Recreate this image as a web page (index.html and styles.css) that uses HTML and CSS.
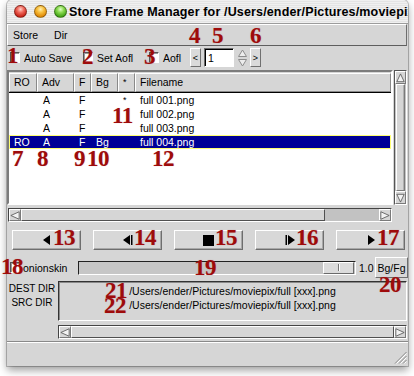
FILE: index.html
```html
<!DOCTYPE html>
<html>
<head>
<meta charset="utf-8">
<link rel="stylesheet" href="styles.css">
</head>
<body>
<div class="stage">
  <div class="window">
    <div class="titlebar">
      <span class="light red"></span><span class="light yellow"></span><span class="light green"></span>
      <span class="title">Store Frame Manager for /Users/ender/Pictures/moviepix</span>
    </div>
    <div class="menubar"><span class="menu">Store</span><span class="menu">Dir</span></div>
    <div class="toolbar">
      <label class="chk w1"><span class="box"></span>Auto Save</label>
      <label class="chk w2"><span class="box"></span>Set Aofl</label>
      <label class="chk w3"><span class="box"></span>Aofl</label>
      <span class="sbtn">&lt;</span>
      <span class="field">1</span>
      <span class="spin"><svg width="9" height="18" viewBox="0 0 9 18"><polygon points="4.5,1 8.5,7.5 0.5,7.5" fill="#ececec" stroke="#8c8c8c"/><polygon points="0.5,10.5 8.5,10.5 4.5,17" fill="#ececec" stroke="#8c8c8c"/></svg></span>
      <span class="sbtn">&gt;</span>
    </div>
    <div class="tablewrap">
      <div class="list">
        <div class="row hdr">
          <span class="c">RO</span><span class="c">Adv</span><span class="c">F</span><span class="c">Bg</span><span class="c star">*</span><span class="c">Filename</span>
        </div>
        <div class="tbody">
          <div class="row"><span class="c"></span><span class="c a">A</span><span class="c">F</span><span class="c"></span><span class="c star">*</span><span class="c">full 001.png</span></div>
          <div class="row"><span class="c"></span><span class="c a">A</span><span class="c">F</span><span class="c"></span><span class="c"></span><span class="c">full 002.png</span></div>
          <div class="row"><span class="c"></span><span class="c a">A</span><span class="c">F</span><span class="c"></span><span class="c"></span><span class="c">full 003.png</span></div>
          <div class="row sel"><span class="c">RO</span><span class="c a">A</span><span class="c">F</span><span class="c">Bg</span><span class="c"></span><span class="c">full 004.png</span></div>
        </div>
      </div>
      <div class="vscroll">
        <span class="arrowbox"><svg width="11" height="12" viewBox="0 0 11 12"><polygon points="5.5,1 10,10.5 1,10.5" fill="#f2f2f2" stroke="#555"/></svg></span>
        <span class="vthumb"></span>
        <span class="arrowbox"><svg width="11" height="12" viewBox="0 0 11 12"><polygon points="1,1.5 10,1.5 5.5,11" fill="#f2f2f2" stroke="#555"/></svg></span>
      </div>
    </div>
    <div class="hscroll hs1">
      <span class="harrow"><svg width="12" height="11" viewBox="0 0 12 11"><polygon points="1,5.5 11,1 11,10" fill="#f2f2f2" stroke="#555"/></svg></span>
      <span class="hthumb t1"></span>
      <span class="trough"></span>
      <span class="harrow"><svg width="12" height="11" viewBox="0 0 12 11"><polygon points="11,5.5 1,1 1,10" fill="#f2f2f2" stroke="#555"/></svg></span>
    </div>
    <div class="buttons">
      <span class="btn"><svg width="8" height="10" viewBox="0 0 8 10"><polygon points="7,0 7,10 0,5" fill="#000"/></svg></span>
      <span class="btn"><svg width="10" height="10" viewBox="0 0 10 10"><polygon points="7,0 7,10 0,5" fill="#000"/><rect x="8" y="0" width="1.5" height="10" fill="#000"/></svg></span>
      <span class="btn"><svg width="11" height="11" viewBox="0 0 11 11"><rect x="0" y="0" width="11" height="11" fill="#000"/></svg></span>
      <span class="btn"><svg width="10" height="10" viewBox="0 0 10 10"><rect x="0.5" y="0" width="1.5" height="10" fill="#000"/><polygon points="3,0 3,10 10,5" fill="#000"/></svg></span>
      <span class="btn"><svg width="8" height="10" viewBox="0 0 8 10"><polygon points="1,0 1,10 8,5" fill="#000"/></svg></span>
    </div>
    <div class="onion">
      <label class="chk"><span class="box"></span>onionskin</label>
      <span class="slider"><span class="sthumb"><span class="tick"></span></span></span>
      <span class="val">1.0</span>
      <span class="bgfg">Bg/Fg</span>
    </div>
    <div class="dirs">
      <div class="labels"><div>DEST DIR</div><div>SRC DIR</div></div>
      <div class="dirbox">
        <div>/Users/ender/Pictures/moviepix/full [xxx].png</div>
        <div>/Users/ender/Pictures/moviepix/full [xxx].png</div>
      </div>
    </div>
    <div class="hscroll hs2">
      <span class="harrow"><svg width="12" height="11" viewBox="0 0 12 11"><polygon points="1,5.5 11,1 11,10" fill="#f2f2f2" stroke="#555"/></svg></span>
      <span class="hthumb t2"></span>
      <span class="harrow"><svg width="12" height="11" viewBox="0 0 12 11"><polygon points="11,5.5 1,1 1,10" fill="#f2f2f2" stroke="#555"/></svg></span>
    </div>
    <div class="footer">
      <svg class="grip" width="13" height="13" viewBox="0 0 13 13"><g stroke="#8a8a8a" stroke-width="1"><line x1="12.5" y1="1" x2="1" y2="12.5"/><line x1="12.5" y1="5" x2="5" y2="12.5"/><line x1="12.5" y1="9" x2="9" y2="12.5"/></g><g stroke="#fff" stroke-width="1"><line x1="12.5" y1="2.5" x2="2.5" y2="12.5"/><line x1="12.5" y1="6.5" x2="6.5" y2="12.5"/><line x1="12.5" y1="10.5" x2="10.5" y2="12.5"/></g></svg>
    </div>
  </div>

  <span class="n n1">1</span>
  <span class="n n2">2</span>
  <span class="n n3">3</span>
  <span class="n n4">4</span>
  <span class="n n5">5</span>
  <span class="n n6">6</span>
  <span class="n n7">7</span>
  <span class="n n8">8</span>
  <span class="n n9">9</span>
  <span class="n n10">10</span>
  <span class="n n11">11</span>
  <span class="n n12">12</span>
  <span class="n n13">13</span>
  <span class="n n14">14</span>
  <span class="n n15">15</span>
  <span class="n n16">16</span>
  <span class="n n17">17</span>
  <span class="n n18">18</span>
  <span class="n n19">19</span>
  <span class="n n20">20</span>
  <span class="n n21">21</span>
  <span class="n n22">22</span>
</div>
</body>
</html>
```
FILE: styles.css
```css
* { box-sizing: border-box; }
html, body { margin: 0; padding: 0; background: #ffffff; }
body {
  font-family: "Liberation Sans", Arial, sans-serif;
  font-size: 10.5px;
  color: #000;
}
.stage { position: relative; width: 414px; height: 376px; overflow: hidden; }

.window {
  margin-left: 7px;
  width: 401px;
  height: 366px;
  background: #d6d6d6;
  border-radius: 5px 5px 0 0;
  box-shadow: 0 0 0 1px rgba(0,0,0,0.22), 0 4px 9px rgba(0,0,0,0.4);
  display: flex;
  flex-direction: column;
  overflow: hidden;
}

/* title bar */
.titlebar {
  height: 24px;
  flex: none;
  display: flex;
  align-items: center;
  padding-left: 7px;
  background: repeating-linear-gradient(to bottom, #f0f0f0 0, #f0f0f0 1px, #e4e4e4 1px, #e4e4e4 2px);
  border-bottom: 1px solid #9c9c9c;
  white-space: nowrap;
  overflow: hidden;
}
.light {
  width: 13px; height: 13px; border-radius: 50%;
  margin-right: 7px; flex: none;
  border: 1px solid rgba(0,0,0,0.35);
}
.red { background: radial-gradient(circle at 50% 30%, #ffd0c8 0, #f06a5e 35%, #c8261a 75%, #8e140c 100%); }
.yellow { background: radial-gradient(circle at 50% 30%, #fff0b0 0, #f8c040 35%, #e08a08 75%, #a05a00 100%); }
.green { background: radial-gradient(circle at 50% 30%, #e0ffc8 0, #8ada50 35%, #44a418 75%, #236a08 100%); }
.title {
  margin-left: -5px;
  font-weight: bold;
  font-size: 12.5px;
  letter-spacing: 0.15px;
  color: #000;
}

/* menu */
.menubar {
  height: 22px; flex: none;
  display: flex; align-items: center;
  padding-left: 5px;
  border-top: 1px solid #fff;
  border-left: 1px solid #fff;
  border-bottom: 1px solid #5e5e5e;
  border-right: 1px solid #6e6e6e;
  margin-right: 1px;
}
.menu { margin-right: 16px; }

/* toolbar */
.toolbar {
  height: 23px; flex: none;
  display: flex; align-items: center;
  padding-left: 3px;
}
.chk { display: flex; align-items: center; white-space: nowrap; }
.w1 { width: 73px; }
.w2 { width: 66px; }
.w3 { width: 41px; }
.box {
  width: 10px; height: 11px; flex: none;
  margin-right: 4px;
  background: #fff;
  border: 1px solid;
  border-color: #555 #fff #fff #555;
  box-shadow: inset 1px 1px #999;
}
.sbtn {
  width: 11px; height: 19px;
  display: flex; align-items: center; justify-content: center;
  font-size: 9px;
  background: #dadada;
  border: 1px solid;
  border-color: #fff #707070 #707070 #fff;
}
.field {
  width: 30px; height: 19px;
  margin-left: 3px;
  background: #fff;
  border: 1px solid;
  border-color: #6a6a6a #fff #fff #6a6a6a;
  box-shadow: inset 1px 1px #000;
  padding: 3px 0 0 3px;
  line-height: 12px;
}
.spin { width: 15px; display: flex; justify-content: center; padding-top: 1px; margin-left: 1px; }

/* table */
.tablewrap {
  height: 135px; flex: none;
  margin-top: 1px;
  display: flex;
}
.list {
  width: 386px;
  height: 135px;
  border: 2px solid;
  border-color: #7c7c7c #fff #fff #7c7c7c;
  display: flex; flex-direction: column;
  background: #d6d6d6;
}
.row {
  display: grid;
  grid-template-columns: 28px 37px 17px 27px 17px 1fr;
  height: 14px;
  line-height: 14px;
}
.hdr {
  height: 21px;
  line-height: 17px;
  border-bottom: 1px solid #000;
  padding-top: 1px;
}
.hdr .c {
  padding-left: 4px;
  border: 1px solid;
  border-color: #fff #8a8a8a #8a8a8a #fff;
  background: #d6d6d6;
}
.tbody { flex: 1; background: #fff; padding-top: 0; }
.tbody .c { padding-left: 5px; }
.tbody .c.a { padding-left: 6px; }
.star { font-size: 9px; }
.sel {
  background: #000096;
  color: #fff;
  box-shadow: inset 0 0 0 1px #ffff72;
}

.vscroll {
  width: 13px; height: 135px;
  margin-left: 1px;
  border: 1px solid;
  border-color: #555 #fff #fff #555;
  display: flex; flex-direction: column;
  background: #c4c4c4;
}
.arrowbox {
  height: 13px; flex: none;
  display: flex; align-items: center; justify-content: center;
  background: #d6d6d6;
  border: 1px solid; border-color: #fff #7a7a7a #7a7a7a #fff;
}
.vthumb {
  flex: 1;
  background: #d6d6d6;
  border: 1px solid; border-color: #fff #7a7a7a #7a7a7a #fff;
  margin: 0 1px;
  box-shadow: inset -1px 0 #b0b0b0;
}

.hscroll {
  flex: none;
  height: 14px;
  display: flex;
  border: 1px solid;
  border-color: #444 #fff #fff #444;
  background: #c2c2c2;
}
.hs1 { margin: 3px 0 0 1px; width: 384px; }
.harrow {
  width: 12px; flex: none;
  display: flex; align-items: center; justify-content: center;
  background: #d6d6d6;
  border: 1px solid; border-color: #fff #7a7a7a #7a7a7a #fff;
}
.hthumb {
  background: #d6d6d6;
  border: 1px solid; border-color: #fff #505050 #505050 #fff;
}
.t1 { width: 304px; }
.trough { flex: 1; }
.t2 { flex: 1; }

/* buttons */
.buttons {
  flex: none;
  height: 20px;
  margin-top: 8px;
  padding-left: 5px;
  display: flex;
  gap: 12px;
}
.btn {
  width: 69px; height: 20px;
  display: flex; align-items: center; justify-content: center;
  background: #d8d8d8;
  border: 1px solid;
  border-color: #fff #6e6e6e #6e6e6e #fff;
  box-shadow: inset -1px -1px #a8a8a8;
}

/* onionskin row */
.onion {
  flex: none;
  height: 21px;
  margin-top: 7px;
  padding-left: 3px;
  display: flex; align-items: center;
}
.onion .chk { width: 68px; }
.onion .box { margin-right: 3px; }
.slider {
  width: 278px; height: 14px;
  border: 1px solid;
  border-color: #222 #fff #fff #222;
  background: #c6c6c6;
  display: flex; justify-content: flex-end;
  padding-right: 1px;
}
.sthumb {
  width: 31px; height: 12px;
  background: #dcdcdc;
  border: 1px solid; border-color: #fff #6a6a6a #6a6a6a #fff;
  display: flex; justify-content: center; align-items: center;
}
.tick { width: 1px; height: 7px; background: #777; box-shadow: 1px 0 #fff; }
.val { margin-left: 3px; width: 16px; }
.bgfg {
  width: 33px; height: 21px;
  display: flex; align-items: center; justify-content: center;
  background: #d8d8d8;
  border: 1px solid;
  border-color: #fff #6e6e6e #6e6e6e #fff;
}

/* dirs */
.dirs {
  flex: none;
  height: 40px;
  margin-top: 3px;
  display: flex;
}
.labels {
  width: 51px;
  font-size: 10px;
  text-align: center;
  line-height: 14px;
  padding: 1px 1px 0 0;
}
.dirbox {
  width: 349px;
  border: 1px solid;
  border-color: #333 #fff #fff #333;
  box-shadow: inset 1px 1px #8a8a8a;
  text-align: center;
  line-height: 14px;
  padding-top: 2px;
}

.hs2 { margin: 4px 0 0 51px; width: 349px; height: 14px; background: #d6d6d6; }

.footer {
  flex: 1;
  margin-top: 2px;
  border-top: 1px solid #8a8a8a;
  box-shadow: inset 0 1px #fff;
  display: flex;
  justify-content: flex-end;
  align-items: flex-end;
  padding: 0 1px 2px 0;
}
.grip { display: block; }

/* annotations */
.n {
  position: absolute;
  font-family: "Liberation Serif", "Times New Roman", serif;
  font-weight: bold;
  font-size: 23px;
  line-height: 23px;
  color: #9e0b0b;
  letter-spacing: -0.5px;
  text-shadow: 0 0 1px rgba(158,11,11,0.35);
}
.n1 { left: 7px; top: 44px; }
.n2 { left: 82px; top: 45px; }
.n3 { left: 144px; top: 45px; }
.n4 { left: 189px; top: 24px; }
.n5 { left: 212px; top: 24px; }
.n6 { left: 250px; top: 24px; }
.n7 { left: 12px; top: 147px; }
.n8 { left: 37px; top: 147px; }
.n9 { left: 74px; top: 147px; }
.n10 { left: 87px; top: 147px; }
.n11 { left: 112px; top: 104px; }
.n12 { left: 152px; top: 147px; }
.n13 { left: 53px; top: 226px; }
.n14 { left: 134px; top: 226px; }
.n15 { left: 215px; top: 226px; }
.n16 { left: 296px; top: 226px; }
.n17 { left: 377px; top: 226px; }
.n18 { left: 1px; top: 255px; }
.n19 { left: 194px; top: 256px; }
.n20 { left: 379px; top: 273px; }
.n21 { left: 105px; top: 279px; }
.n22 { left: 104px; top: 294px; }
```
